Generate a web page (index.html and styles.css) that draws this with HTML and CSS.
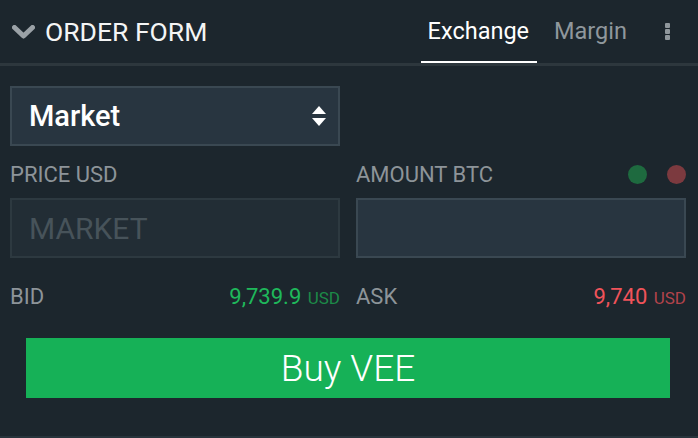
FILE: index.html
```html
<!DOCTYPE html>
<html lang="en">
<head>
    <meta charset="UTF-8">
    <meta name="viewport" content="width=device-width, initial-scale=1.0">
    <title>Order form</title>
    <link rel="stylesheet" href="styles.css">
</head>
<body>
    <div class="panel">
        <div class="header">
            <div class="title">
                <svg class="chevron" width="23" height="14" viewBox="0 0 23 14">
                    <path d="M2.5 2.5 L11.5 11 L20.5 2.5" fill="none" stroke="#9aa1a6" stroke-width="5" stroke-linecap="round" stroke-linejoin="round"/>
                </svg>
                <span>ORDER FORM</span>
            </div>
            <div class="tabs">
                <div class="tab active">Exchange</div>
                <div class="tab">Margin</div>
                <div class="menu">
                    <span></span><span></span><span></span>
                </div>
            </div>
        </div>

        <div class="body">
            <div class="select">
                <span>Market</span>
                <svg width="14" height="20" viewBox="0 0 14 20">
                    <path d="M7 0 L14 8 L0 8 Z" fill="#fff"/>
                    <path d="M0 12 L14 12 L7 20 Z" fill="#fff"/>
                </svg>
            </div>

            <div class="fields">
                <div class="field">
                    <div class="label-row">
                        <span class="label">PRICE USD</span>
                    </div>
                    <input class="input disabled" placeholder="MARKET" readonly>
                </div>
                <div class="field">
                    <div class="label-row">
                        <span class="label">AMOUNT BTC</span>
                        <div class="dots">
                            <span class="dot green"></span>
                            <span class="dot red"></span>
                        </div>
                    </div>
                    <input class="input">
                </div>
            </div>

            <div class="quotes">
                <div class="quote">
                    <span class="label">BID</span>
                    <span class="value bid">9,739.9 <small>USD</small></span>
                </div>
                <div class="quote">
                    <span class="label">ASK</span>
                    <span class="value ask">9,740 <small>USD</small></span>
                </div>
            </div>

            <button class="buy">Buy VEE</button>
        </div>
    </div>
</body>
</html>
```

FILE: styles.css
```css
* {
    margin: 0;
    padding: 0;
    box-sizing: border-box;
    font-family: Roboto, "Liberation Sans", Arial, sans-serif;
}

body {
    background-color: #1c262d;
}

.panel {
    width: 698px;
    height: 438px;
    background-color: #1c262d;
    border-bottom: 2px solid #28343c;
}

.header {
    display: flex;
    align-items: center;
    height: 66px;
    border-bottom: 3px solid #2d373d;
    padding-left: 12px;
}

.title {
    display: flex;
    align-items: center;
    color: #f4f5f5;
    font-size: 26.5px;
}

.chevron {
    margin-right: 10px;
}

.tabs {
    margin-left: auto;
    display: flex;
    align-items: center;
    height: 100%;
}

.tab {
    height: 100%;
    line-height: 63px;
    padding: 0 8px 0 7px;
    margin-right: 10px;
    font-size: 23.5px;
    color: #8f979c;
}

.tab.active {
    color: #fff;
    box-shadow: inset 0 -2px 0 #fff;
}

.menu {
    display: flex;
    flex-direction: column;
    gap: 1px;
    margin: 0 28px 0 20px;
}

.menu span {
    width: 5px;
    height: 5px;
    border-radius: 1px;
    background-color: #8f979c;
}

.body {
    padding: 20px 12px 0 10px;
}

.select {
    display: flex;
    align-items: center;
    justify-content: space-between;
    height: 60px;
    width: 330px;
    padding: 0 12px 0 17px;
    background-color: #283540;
    border: 2px solid #3a4852;
    color: #fff;
    font-size: 29px;
    font-weight: 500;
}

.fields {
    display: grid;
    grid-template-columns: 330px 330px;
    gap: 16px;
}

.label-row {
    display: flex;
    align-items: center;
    justify-content: space-between;
    height: 52px;
    padding-top: 4px;
}

.label {
    font-size: 22px;
    color: #8d9499;
}

.dots {
    display: flex;
    gap: 20px;
}

.dot {
    width: 19px;
    height: 19px;
    border-radius: 50%;
}

.dot.green {
    background-color: #1e6a3f;
}

.dot.red {
    background-color: #7c3a3f;
}

.input {
    display: block;
    width: 100%;
    height: 60px;
    padding: 0 17px;
    background-color: #283540;
    border: 2px solid #3a4852;
    outline: none;
    color: #fff;
    font-size: 30px;
}

.input.disabled {
    background-color: #222d35;
    border-color: #2d3940;
}

.input::placeholder {
    color: #47535a;
}

.quotes {
    display: grid;
    grid-template-columns: 330px 330px;
    gap: 16px;
    height: 80px;
    padding-bottom: 4px;
}

.quote {
    display: flex;
    align-items: center;
    justify-content: space-between;
}

.value {
    font-size: 22px;
}

.value small {
    font-size: 17px;
    margin-left: 1px;
}

.bid {
    color: #1fb85b;
}

.bid small {
    color: #1c8a48;
}

.ask {
    color: #f0535a;
}

.ask small {
    color: #b2434b;
}

.buy {
    display: block;
    width: 644px;
    height: 60px;
    margin-left: 16px;
    background-color: #16b157;
    border: none;
    color: #fff;
    font-size: 37px;
    font-weight: 300;
    cursor: pointer;
}
```
